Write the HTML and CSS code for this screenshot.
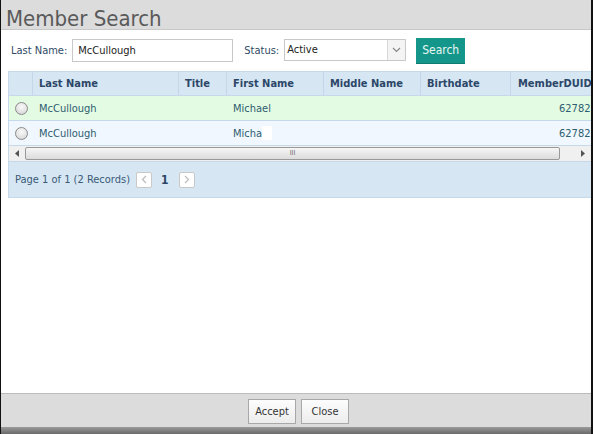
FILE: index.html
```html
<!DOCTYPE html>
<html>
<head>
<meta charset="utf-8">
<link rel="stylesheet" href="styles.css">
</head>
<body>
<div class="win">
  <div class="titlebar"><span class="title">Member Search</span></div>
  <div class="content">
    <div class="form">
      <label class="lbl">Last Name:</label>
      <div class="input">McCullough</div>
      <label class="lbl status">Status:</label>
      <div class="select"><span class="selval">Active</span><span class="selbtn"><svg width="9" height="6" viewBox="0 0 9 6"><path d="M1 1 L4.5 4.5 L8 1" fill="none" stroke="#888" stroke-width="1.2"/></svg></span></div>
      <div class="btn-search">Search</div>
    </div>
    <div class="grid">
      <div class="tablewrap">
        <div class="row head">
          <div class="c c0"></div>
          <div class="c c1">Last Name</div>
          <div class="c c2">Title</div>
          <div class="c c3">First Name</div>
          <div class="c c4">Middle Name</div>
          <div class="c c5">Birthdate</div>
          <div class="c c6">MemberDUID</div>
        </div>
        <div class="row r1">
          <div class="c c0"><span class="radio"></span></div>
          <div class="c c1">McCullough</div>
          <div class="c c2"></div>
          <div class="c c3">Michael</div>
          <div class="c c4"></div>
          <div class="c c5"></div>
          <div class="c c6 num">627821</div>
        </div>
        <div class="row r2">
          <div class="c c0"><span class="radio"></span></div>
          <div class="c c1">McCullough</div>
          <div class="c c2"></div>
          <div class="c c3"><span class="partial">Micha</span><span class="blank"></span></div>
          <div class="c c4"></div>
          <div class="c c5"></div>
          <div class="c c6 num">627822</div>
        </div>
      </div>
      <div class="hscroll">
        <span class="arr"><svg width="4" height="7" viewBox="0 0 4 7"><path d="M4 0 L0 3.5 L4 7 Z" fill="#555"/></svg></span>
        <div class="track"><div class="thumb"><span class="grip">III</span></div></div>
        <span class="arr"><svg width="4" height="7" viewBox="0 0 4 7"><path d="M0 0 L4 3.5 L0 7 Z" fill="#555"/></svg></span>
      </div>
      <div class="pager">
        <span class="ptext">Page 1 of 1 (2 Records)</span>
        <span class="pbtn"><svg width="6" height="9" viewBox="0 0 6 9"><path d="M5 1 L1.5 4.5 L5 8" fill="none" stroke="#bbb" stroke-width="1.2"/></svg></span>
        <span class="pnum">1</span>
        <span class="pbtn"><svg width="6" height="9" viewBox="0 0 6 9"><path d="M1 1 L4.5 4.5 L1 8" fill="none" stroke="#bbb" stroke-width="1.2"/></svg></span>
      </div>
    </div>
  </div>
  <div class="footer">
    <div class="fbtn">Accept</div>
    <div class="fbtn">Close</div>
  </div>
  <div class="bottomstrip"></div>
</div>
</body>
</html>
```
FILE: styles.css
```css
html, body {
  margin: 0;
  padding: 0;
  background: #fff;
}
body {
  width: 593px;
  height: 434px;
  overflow: hidden;
  font-family: "DejaVu Sans Condensed", "DejaVu Sans", sans-serif;
  font-size: 11px;
}
.win {
  width: 590px;
  height: 434px;
  border-left: 1px solid #111;
  border-right: 2px solid #111;
  display: flex;
  flex-direction: column;
  background: #fff;
}
.titlebar {
  height: 29px;
  background: #dcdcdc;
  border-bottom: 1px solid #c8c8c8;
  display: flex;
  align-items: flex-end;
  padding-left: 5px;
  overflow: hidden;
}
.title {
  font-family: "DejaVu Sans Condensed", "DejaVu Sans", sans-serif;
  font-size: 22px;
  color: #5a5a5a;
  line-height: 28px;
  position: relative;
  top: 4px;
}
.content {
  flex: 1;
  padding: 7px 0 0 7px;
}
.form {
  display: flex;
  align-items: center;
  height: 26px;
  padding-left: 3px;
}
.lbl {
  color: #2f4a66;
  margin-right: 5px;
}
.status {
  margin-left: 11px;
  margin-right: 4px;
}
.input {
  width: 154px;
  height: 21px;
  border: 1px solid #c8c8c8;
  box-sizing: content-box;
  padding-left: 5px;
  line-height: 21px;
  color: #222;
}
.select {
  width: 120px;
  height: 20px;
  border: 1px solid #c8c8c8;
  display: flex;
  margin-right: 10px;
  margin-left: 1px;
}
.selval {
  flex: 1;
  line-height: 20px;
  padding-left: 2px;
  color: #222;
}
.selbtn {
  width: 17px;
  border-left: 1px solid #d8d8d8;
  display: flex;
  align-items: center;
  justify-content: center;
  background: #f4f4f4;
}
.btn-search {
  width: 49px;
  height: 25px;
  background: #15968a;
  color: #e8f6f4;
  display: flex;
  align-items: center;
  justify-content: center;
  font-size: 12px;
  box-shadow: 0 1px 0 #0f7a70;
}
.grid {
  margin-top: 8px;
  width: 582px;
  border-left: 1px solid #c6d9ea;
  background: #d6e7f3;
}
.tablewrap {
  overflow: hidden;
  background: #fff;
}
.row {
  display: flex;
  height: 24px;
  border-bottom: 1px solid #c6d9ea;
  width: 640px;
}
.head {
  background: #d6e6f3;
  font-weight: bold;
  color: #2c4668;
  border-top: 1px solid #c6d9ea;
  height: 23px;
}
.r1 { background: #e4fbe3; color: #2d5d70; }
.r2 { background: #f0f7fe; color: #2d5d70; }
.c {
  box-sizing: border-box;
  display: flex;
  align-items: center;
  padding-left: 6px;
  white-space: nowrap;
  overflow: hidden;
}
.head .c { border-right: 1px solid #c3d7e9; }
.c0 { width: 24px; padding-left: 6px; }
.c1 { width: 146px; }
.c2 { width: 48px; }
.c3 { width: 97px; }
.c4 { width: 97px; }
.c5 { width: 90px; }
.c6 { width: 120px; }
.head .c6 { padding-left: 7px; }
.r1 .c6, .r2 .c6 { padding-left: 48px; }
.radio {
  width: 11px;
  height: 11px;
  border-radius: 50%;
  border: 1px solid #8a8a8a;
  background: radial-gradient(circle at 50% 35%, #fafafa 0%, #e2e2e2 60%, #c8c8c8 100%);
  display: inline-block;
}
.blank {
  display: inline-block;
  width: 10px;
  height: 14px;
  background: #fff;
}
.hscroll {
  height: 15px;
  background: #f0f0f0;
  display: flex;
  align-items: center;
  border-bottom: 1px solid #c6d9ea;
}
.arr {
  width: 16px;
  display: flex;
  align-items: center;
  justify-content: center;
}
.track {
  flex: 1;
  height: 13px;
  display: flex;
  align-items: center;
}
.thumb {
  width: 533px;
  height: 11px;
  border: 1px solid #999;
  border-radius: 2px;
  background: linear-gradient(#f6f6f6, #dcdcdc);
  display: flex;
  align-items: center;
  justify-content: center;
}
.grip {
  font-size: 7px;
  color: #666;
  line-height: 7px;
}
.pager {
  height: 35px;
  display: flex;
  align-items: center;
  padding-left: 6px;
  border-bottom: 1px solid #c6d9ea;
  background: #d6e7f3;
}
.ptext {
  color: #3a5a78;
  margin-right: 6px;
}
.pbtn {
  width: 14px;
  height: 14px;
  border: 1px solid #c8c8c8;
  background: #fff;
  border-radius: 2px;
  display: flex;
  align-items: center;
  justify-content: center;
}
.pnum {
  font-weight: bold;
  color: #2c4668;
  margin: 0 10px 0 9px;
  font-size: 12px;
}
.footer {
  height: 33px;
  background: #dcdcdc;
  border-top: 1px solid #bcbcbc;
  display: flex;
  align-items: center;
  justify-content: center;
  gap: 5px;
  padding-left: 5px;
}
.fbtn {
  width: 48px;
  height: 25px;
  border: 1px solid #a8a8a8;
  background: linear-gradient(#fdfdfd, #ececec);
  display: flex;
  align-items: center;
  justify-content: center;
  color: #333;
  font-size: 11px;
  box-sizing: border-box;
  margin-top: 2px;
}
.bottomstrip {
  height: 7px;
  background: linear-gradient(#9a9a9a, #6a6a6a);
}
```
